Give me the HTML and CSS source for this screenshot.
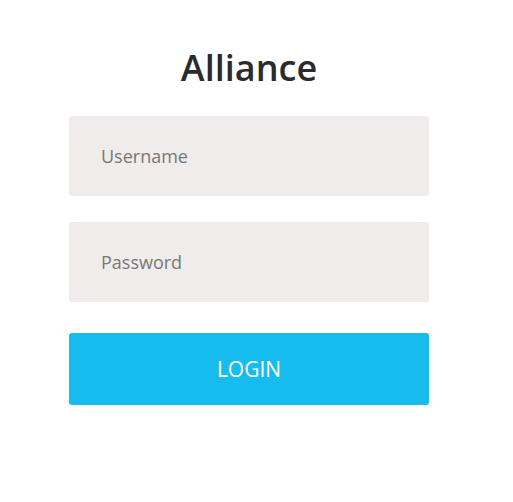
FILE: index.html
```html
<!DOCTYPE html>
<html>
<head>
<meta charset="utf-8">
<link rel="stylesheet" href="styles.css">
</head>
<body>
<div class="page">
  <form class="login">
    <h1 class="title">Alliance</h1>
    <input class="field" type="text" placeholder="Username">
    <input class="field field-second" type="password" placeholder="Password">
    <button class="btn" type="button">LOGIN</button>
  </form>
</div>
</body>
</html>
```
FILE: styles.css
```css
html, body {
  margin: 0;
  padding: 0;
  background: #ffffff;
}
.page {
  width: 498px;
  display: flex;
  justify-content: center;
  font-family: "Open Sans", "Noto Sans", sans-serif;
}
.login {
  width: 360px;
  display: flex;
  flex-direction: column;
  padding-top: 43px;
}
.title {
  margin: 0 0 23px;
  text-align: center;
  font-size: 36px;
  font-weight: 600;
  line-height: 50px;
  color: #2b2b2b;
}
.field {
  box-sizing: border-box;
  height: 80px;
  width: 100%;
  border: none;
  border-radius: 3px;
  background: #efeceb;
  padding: 0 32px;
  font-family: inherit;
  font-size: 18px;
  color: #333;
  outline: none;
}
.field::placeholder {
  color: #7a7777;
}
.field-second {
  margin-top: 26px;
}
.btn {
  margin-top: 31px;
  height: 72px;
  border: none;
  border-radius: 3px;
  background: #17bcee;
  color: #ffffff;
  font-family: inherit;
  font-size: 21px;
  padding: 0;
}
```
